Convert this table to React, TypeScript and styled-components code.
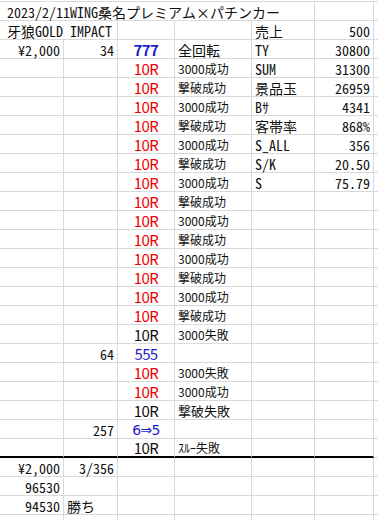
import React from "react";
import styled, { createGlobalStyle } from "styled-components";

const GOTHIC = `"Noto Sans CJK JP", "Noto Sans", sans-serif`;
const MONO = `"Noto Sans Mono CJK JP", "Noto Sans CJK JP", "DejaVu Sans Mono", monospace`;
const SYMBOL = `"DejaVu Sans", "Noto Sans CJK JP", sans-serif`;

const colors = {
  grid: "#d9d9d9",
  text: "#111111",
  red: "#f00000",
  blue: "#1c1cc8",
};

const GlobalStyle = createGlobalStyle`
  html, body {
    margin: 0;
    padding: 0;
    background: #ffffff;
  }
  body {
    width: 378px;
    height: 520px;
    overflow: hidden;
  }
`;

type Align = "left" | "right" | "center";
type Face = "gothic" | "mono" | "symbol";

type CellData = {
  text?: string;
  span?: number;
  align?: Align;
  color?: string;
  bold?: boolean;
  size?: number;
  face?: Face;
  tight?: boolean;
};

const faces: Record<Face, string> = {
  gothic: GOTHIC,
  mono: MONO,
  symbol: SYMBOL,
};

const Sheet = styled.div`
  display: grid;
  grid-template-columns: 64px 54px 57px 77px 63px 59px 1fr;
  grid-auto-rows: 19px;
  margin-top: 1px;
  border-top: 1px solid ${colors.grid};
  color: ${colors.text};
`;

const Cell = styled.div<{
  $align: Align;
  $span: number;
  $color?: string;
  $bold?: boolean;
  $size: number;
  $face: Face;
  $tight?: boolean;
  $thick?: boolean;
  $first?: boolean;
}>`
  grid-column: span ${({ $span }) => $span};
  box-sizing: border-box;
  display: flex;
  align-items: center;
  justify-content: ${({ $align }) =>
    $align === "right" ? "flex-end" : $align === "center" ? "center" : "flex-start"};
  padding: 1px 3px 0 ${({ $first }) => ($first ? "7px" : "3px")};
  border-right: 1px solid ${colors.grid};
  border-bottom: ${({ $thick }) =>
    $thick ? "2px solid #000" : `1px solid ${colors.grid}`};
  font-family: ${({ $face }) => faces[$face]};
  font-size: ${({ $size }) => $size}px;
  font-weight: ${({ $bold }) => ($bold ? 700 : 400)};
  letter-spacing: ${({ $tight }) => ($tight ? "-0.6px" : "0")};
  color: ${({ $color }) => $color ?? colors.text};
  line-height: 16px;
  white-space: nowrap;
  overflow: visible;
`;

const RED = colors.red;
const BLUE = colors.blue;

const result = (text: string): CellData => ({ text, size: 12 });
const round = (color?: string): CellData => ({
  text: "10R",
  align: "center",
  color,
  size: 15,
  tight: true,
});
const label = (text: string): CellData => ({ text, size: 14, face: "mono" });
const num = (text: string): CellData => ({ text, align: "right", size: 14, face: "mono" });
const hit = (text: string, bold?: boolean): CellData => ({
  text,
  align: "center",
  color: BLUE,
  bold,
  size: 15,
  tight: true,
});

const stats: [string, string][] = [
  ["SUM", "31300"],
  ["景品玉", "26959"],
  ["Bｻ", "4341"],
  ["客帯率", "868%"],
  ["S_ALL", "356"],
  ["S/K", "20.50"],
  ["S", "75.79"],
];

const blank = (n: number): CellData[] => Array.from({ length: n }, () => ({}));

const buildRows = (): CellData[][] => {
  const rows: CellData[][] = [];
  rows.push([
    { text: "2023/2/11WING桑名プレミアム×パチンカー", span: 5, size: 14, face: "mono" },
    ...blank(2),
  ]);
  rows.push([
    { text: "牙狼GOLD IMPACT", span: 2, size: 14, face: "mono" },
    ...blank(2),
    label("売上"),
    num("500"),
    {},
  ]);
  rows.push([
    num("¥2,000"),
    num("34"),
    hit("777", true),
    { text: "全回転", size: 14 },
    label("TY"),
    num("30800"),
    {},
  ]);
  // 14 red rounds, alternating results
  for (let i = 0; i < 14; i++) {
    const s = stats[i];
    rows.push([
      ...blank(2),
      round(RED),
      result(i % 2 === 0 ? "3000成功" : "撃破成功"),
      s ? label(s[0]) : {},
      s ? num(s[1]) : {},
      {},
    ]);
  }
  rows.push([...blank(2), round(), result("3000失敗"), ...blank(3)]);
  rows.push([{}, num("64"), hit("555"), ...blank(4)]);
  rows.push([...blank(2), round(RED), result("3000失敗"), ...blank(3)]);
  rows.push([...blank(2), round(RED), result("3000成功"), ...blank(3)]);
  rows.push([...blank(2), round(), { text: "撃破失敗", size: 13 }, ...blank(3)]);
  rows.push([{}, num("257"), { ...hit("6⇒5"), size: 14, face: "symbol" }, ...blank(4)]);
  rows.push([...blank(2), round(), { text: "ｽﾙｰ失敗", size: 12 }, ...blank(3)]);
  rows.push([num("¥2,000"), num("3/356"), ...blank(5)]);
  rows.push([num("96530"), ...blank(6)]);
  rows.push([num("94530"), { text: "勝ち", size: 14 }, ...blank(5)]);
  rows.push(blank(7));
  return rows;
};

const THICK_ROW = 23;

export default function App() {
  const rows = buildRows();
  return (
    <>
      <GlobalStyle />
      <Sheet>
        {rows.map((row, r) => {
          let col = 0;
          return row.map((c, i) => {
            const span = c.span ?? 1;
            const first = col === 0;
            const thick = r === THICK_ROW && col < 6;
            col += span;
            return (
              <Cell
                key={`${r}-${i}`}
                $align={c.align ?? "left"}
                $span={span}
                $color={c.color}
                $bold={c.bold}
                $size={c.size ?? 14}
                $face={c.face ?? "gothic"}
                $tight={c.tight}
                $thick={thick}
                $first={first && c.align !== "right"}
              >
                {c.text}
              </Cell>
            );
          });
        })}
      </Sheet>
    </>
  );
}
